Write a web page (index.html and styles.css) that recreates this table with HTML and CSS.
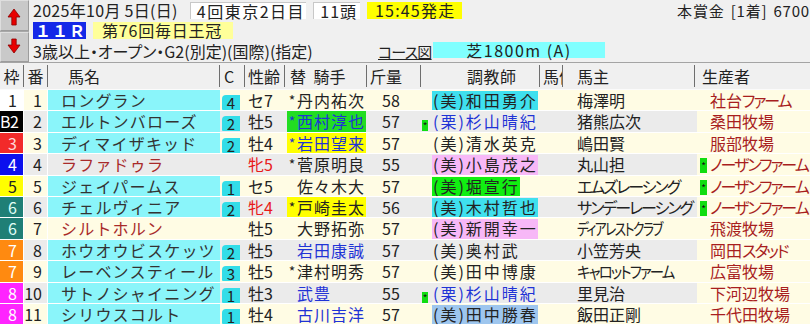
FILE: index.html
```html
<!DOCTYPE html>
<html lang="ja">
<head>
<meta charset="utf-8">
<title>出馬表</title>
<link rel="stylesheet" href="styles.css">
</head>
<body>
<div class="top">
  <div class="nav">
    <div class="navbtn up">
      <svg width="14" height="18" viewBox="0 0 14 18"><path d="M7 1 L13 9 L9.2 9 L9.2 17 L4.8 17 L4.8 9 L1 9 Z" fill="#e80000" stroke="#8a0000" stroke-width="0.8"/></svg>
    </div>
    <div class="navbtn down">
      <svg width="14" height="16" viewBox="0 0 14 16"><path d="M7 15 L13 7 L9.2 7 L9.2 1 L4.8 1 L4.8 7 L1 7 Z" fill="#e80000" stroke="#8a0000" stroke-width="0.8"/></svg>
    </div>
  </div>
  <div class="info">
    <div class="line l1">
      <span class="date">2025年10月 5日(日)</span>
      <span class="box kai">4回東京2日目</span>
      <span class="box tou">11頭</span>
      <span class="box time">15:45発走</span>
      <span class="prize">本賞金 [1着] 6700</span>
    </div>
    <div class="line l2">
      <span class="race-no">１１Ｒ</span>
      <span class="race-name">第76回毎日王冠</span>
    </div>
    <div class="line l3">
      <span class="cond">3歳以上・オープン・G2(別定)(国際)(指定)</span>
      <span class="course-link">コース図</span>
      <span class="course">芝1800m (A)</span>
    </div>
  </div>
</div>

<div class="thead">
  <div class="th c-waku">枠</div>
  <div class="th c-ban">番</div>
  <div class="th c-name">馬名</div>
  <div class="th c-c">C</div>
  <div class="th c-sa">性齢</div>
  <div class="th c-jk">替 騎手</div>
  <div class="th c-wt">斤量</div>
  <div class="th c-tr">調教師</div>
  <div class="th c-hw">馬体重</div>
  <div class="th c-ow">馬主</div>
  <div class="th c-br">生産者</div>
</div>

<div class="tbody">
  <div class="row odd">
    <div class="waku w1">1</div><div class="ban">1</div>
    <div class="name">ロングラン</div>
    <div class="c"><span class="cbox">4</span></div>
    <div class="sa">セ7</div>
    <div class="jockey"><span class="jk"><span class="ast">*</span><span class="jname">丹内祐次</span></span></div>
    <div class="wt">58</div>
    <div class="mark"></div>
    <div class="trainer"><span class="tb cyan">(美)和田勇介</span></div>
    <div class="hw"></div>
    <div class="owner">梅澤明</div>
    <div class="bmark"></div>
    <div class="breeder">社台<span class="k">ファーム</span></div>
  </div>

  <div class="row even">
    <div class="waku w2">B2</div><div class="ban">2</div>
    <div class="name">エルトンバローズ</div>
    <div class="c"><span class="cbox">2</span></div>
    <div class="sa">牡5</div>
    <div class="jockey"><span class="jk green blue"><span class="ast">*</span><span class="jname">西村淳也</span></span></div>
    <div class="wt">57</div>
    <div class="mark"><span class="mk">*</span></div>
    <div class="trainer"><span class="tb blue">(栗)杉山晴紀</span></div>
    <div class="hw"></div>
    <div class="owner">猪熊広次</div>
    <div class="bmark"></div>
    <div class="breeder">桑田牧場</div>
  </div>

  <div class="row odd">
    <div class="waku w3">3</div><div class="ban">3</div>
    <div class="name">ディマイザキッド</div>
    <div class="c"><span class="cbox">2</span></div>
    <div class="sa">牡4</div>
    <div class="jockey"><span class="jk yellow blue"><span class="ast">*</span><span class="jname">岩田望来</span></span></div>
    <div class="wt">57</div>
    <div class="mark"></div>
    <div class="trainer"><span class="tb">(美)清水英克</span></div>
    <div class="hw"></div>
    <div class="owner">嶋田賢</div>
    <div class="bmark"></div>
    <div class="breeder">服部牧場</div>
  </div>

  <div class="row even">
    <div class="waku w4">4</div><div class="ban">4</div>
    <div class="name plain">ラファドゥラ</div>
    <div class="c"></div>
    <div class="sa red">牝5</div>
    <div class="jockey"><span class="jk"><span class="ast">*</span><span class="jname">菅原明良</span></span></div>
    <div class="wt">55</div>
    <div class="mark"></div>
    <div class="trainer"><span class="tb pink">(美)小島茂之</span></div>
    <div class="hw"></div>
    <div class="owner">丸山担</div>
    <div class="bmark"><span class="bmk">*</span></div>
    <div class="breeder"><span class="k">ノーザンファーム</span></div>
  </div>

  <div class="row odd">
    <div class="waku w5">5</div><div class="ban">5</div>
    <div class="name">ジェイパームス</div>
    <div class="c"><span class="cbox">1</span></div>
    <div class="sa">セ5</div>
    <div class="jockey"><span class="jk"><span class="ast"></span><span class="jname">佐々木大</span></span></div>
    <div class="wt">57</div>
    <div class="mark"></div>
    <div class="trainer"><span class="tb green">(美)堀宣行</span></div>
    <div class="hw"></div>
    <div class="owner"><span class="k">エムズレーシング</span></div>
    <div class="bmark"><span class="bmk">*</span></div>
    <div class="breeder"><span class="k">ノーザンファーム</span></div>
  </div>

  <div class="row even">
    <div class="waku w6">6</div><div class="ban">6</div>
    <div class="name">チェルヴィニア</div>
    <div class="c"><span class="cbox">2</span></div>
    <div class="sa red">牝4</div>
    <div class="jockey"><span class="jk yellow"><span class="ast">*</span><span class="jname">戸崎圭太</span></span></div>
    <div class="wt">56</div>
    <div class="mark"></div>
    <div class="trainer"><span class="tb cyan">(美)木村哲也</span></div>
    <div class="hw"></div>
    <div class="owner"><span class="k">サンデーレーシング</span></div>
    <div class="bmark"><span class="bmk">*</span></div>
    <div class="breeder"><span class="k">ノーザンファーム</span></div>
  </div>

  <div class="row odd">
    <div class="waku w6">6</div><div class="ban">7</div>
    <div class="name plain">シルトホルン</div>
    <div class="c"></div>
    <div class="sa">牡5</div>
    <div class="jockey"><span class="jk"><span class="ast"></span><span class="jname">大野拓弥</span></span></div>
    <div class="wt">57</div>
    <div class="mark"></div>
    <div class="trainer"><span class="tb pink">(美)新開幸一</span></div>
    <div class="hw"></div>
    <div class="owner"><span class="k narrow">ディアレストクラブ</span></div>
    <div class="bmark"></div>
    <div class="breeder">飛渡牧場</div>
  </div>

  <div class="row even">
    <div class="waku w7">7</div><div class="ban">8</div>
    <div class="name">ホウオウビスケッツ</div>
    <div class="c"><span class="cbox">2</span></div>
    <div class="sa">牡5</div>
    <div class="jockey"><span class="jk blue"><span class="ast"></span><span class="jname">岩田康誠</span></span></div>
    <div class="wt">57</div>
    <div class="mark"></div>
    <div class="trainer"><span class="tb">(美)奥村武</span></div>
    <div class="hw"></div>
    <div class="owner">小笠芳央</div>
    <div class="bmark"></div>
    <div class="breeder">岡田<span class="k">スタッド</span></div>
  </div>

  <div class="row odd">
    <div class="waku w7">7</div><div class="ban">9</div>
    <div class="name">レーベンスティール</div>
    <div class="c"><span class="cbox">3</span></div>
    <div class="sa">牡5</div>
    <div class="jockey"><span class="jk"><span class="ast">*</span><span class="jname">津村明秀</span></span></div>
    <div class="wt">57</div>
    <div class="mark"></div>
    <div class="trainer"><span class="tb">(美)田中博康</span></div>
    <div class="hw"></div>
    <div class="owner"><span class="k narrow2">キャロットファーム</span></div>
    <div class="bmark"></div>
    <div class="breeder">広富牧場</div>
  </div>

  <div class="row even">
    <div class="waku w8">8</div><div class="ban">10</div>
    <div class="name">サトノシャイニング</div>
    <div class="c"><span class="cbox">1</span></div>
    <div class="sa">牡3</div>
    <div class="jockey"><span class="jk blue"><span class="ast"></span><span class="jname">武豊</span></span></div>
    <div class="wt">55</div>
    <div class="mark"><span class="mk">*</span></div>
    <div class="trainer"><span class="tb blue">(栗)杉山晴紀</span></div>
    <div class="hw"></div>
    <div class="owner">里見治</div>
    <div class="bmark"></div>
    <div class="breeder">下河辺牧場</div>
  </div>

  <div class="row odd">
    <div class="waku w8">8</div><div class="ban">11</div>
    <div class="name">シリウスコルト</div>
    <div class="c"><span class="cbox">1</span></div>
    <div class="sa">牡4</div>
    <div class="jockey"><span class="jk blue"><span class="ast"></span><span class="jname">古川吉洋</span></span></div>
    <div class="wt">57</div>
    <div class="mark"></div>
    <div class="trainer"><span class="tb lblue">(美)田中勝春</span></div>
    <div class="hw"></div>
    <div class="owner">飯田正剛</div>
    <div class="bmark"></div>
    <div class="breeder">千代田牧場</div>
  </div>
</div>
</body>
</html>
```

FILE: styles.css
```css
* { box-sizing: border-box; }

html, body {
  margin: 0;
  padding: 0;
}

body {
  width: 810px;
  height: 327px;
  overflow: hidden;
  background: #fbfbfb;
  font-family: "Noto Sans CJK JP", "Noto Sans", sans-serif;
  font-size: 16px;
  color: #222;
}

/* ---------- top info area ---------- */
.top {
  display: flex;
  height: 62px;
  background: #f0f0f0;
}

.nav {
  width: 29px;
  display: flex;
  flex-direction: column;
  gap: 1px;
  background: #a8a8a8;
}

.navbtn {
  flex: 1;
  background: #c9c9c9;
  border: 1px solid;
  border-color: #dedede #9c9c9c #9c9c9c #dedede;
  display: flex;
  align-items: center;
  justify-content: center;
}

.navbtn.up svg { margin-top: 4px; margin-left: -2px; }
.navbtn.down svg { margin-top: -2px; margin-left: -2px; }

.info {
  flex: 1;
  padding: 1px 0 0 4px;
  display: flex;
  flex-direction: column;
  white-space: nowrap;
  overflow: hidden;
}

.line {
  display: flex;
  align-items: center;
}

.l1 { height: 19px; }
.l2 { height: 20px; }
.l3 { height: 21px; }

.date {
  width: 162px;
  line-height: 17px;
  letter-spacing: 0.3px;
}

.box {
  height: 17px;
  line-height: 17px;
}

.kai {
  width: 120px;
  background: #fff;
  border-left: 1px solid #c8c8c8;
  border-top: 1px solid #c8c8c8;
  padding-left: 6px;
  letter-spacing: 1.5px;
}

.tou {
  width: 48px;
  margin-left: 7px;
  background: #fff;
  border-left: 1px solid #c8c8c8;
  border-top: 1px solid #c8c8c8;
  padding-left: 6px;
  letter-spacing: 1px;
}

.time {
  width: 98px;
  margin-left: 7px;
  background: #ffff00;
  padding-left: 8px;
  letter-spacing: 1.2px;
}

.prize {
  margin-left: 215px;
  font-size: 15px;
  line-height: 17px;
  letter-spacing: 0.8px;
  word-spacing: 2px;
}

.race-no {
  width: 53px;
  height: 17px;
  line-height: 17px;
  margin-top: 1px;
  background: #1428e8;
  color: #fff;
  font-weight: bold;
  letter-spacing: 1px;
  padding-left: 2px;
}

.race-name {
  width: 140px;
  height: 17px;
  line-height: 17px;
  margin-top: 1px;
  margin-left: 7px;
  background: #ffff99;
  padding-left: 9px;
  letter-spacing: 0.8px;
}

.cond {
  width: 345px;
  font-feature-settings: "palt";
  line-height: 17px;
  margin-top: 1px;
}

.course-link {
  width: 55px;
  font-size: 15px;
  line-height: 17px;
  text-decoration: underline;
  font-feature-settings: "palt";
  letter-spacing: -0.8px;
  margin-top: 2px;
}

.course {
  width: 172px;
  height: 16px;
  line-height: 16px;
  margin-top: -2px;
  background: #80ffff;
  text-align: center;
  letter-spacing: 1.5px;
}

/* ---------- table header ---------- */
.thead {
  display: grid;
  grid-template-columns: 24px 24px 172px 25px 40px 82px 54px 119px 23px 132px 1fr;
  height: 27px;
  align-items: center;
  background: #f0f0f0;
  border-top: 1px solid #a4a4a4;
  white-space: nowrap;
}

.th {
  height: 22px;
  line-height: 22px;
  border-right: 1px solid #6e6e6e;
  overflow: hidden;
}

.th:last-child { border-right: none; }

.c-waku, .c-ban { text-align: center; }
.c-name { padding-left: 20px; }
.c-c { padding-left: 4px; }
.c-sa { padding-left: 3px; }
.c-jk { padding-left: 5px; word-spacing: 4px; }
.c-wt { padding-left: 3px; }
.c-tr { padding-left: 46px; letter-spacing: 0.5px; }
.c-hw { padding-left: 3px; }
.c-ow { padding-left: 14px; }
.c-br { padding-left: 7px; }

/* ---------- table body ---------- */
.tbody {
  background: #fff;
  padding-bottom: 3px;
}

.row {
  display: grid;
  grid-template-columns: 24px 24px 172px 25px 40px 82px 54px 11px 108px 23px 134px 12px 1fr;
  height: 20.4px;
  margin-top: 1px;
  line-height: 20.4px;
  white-space: nowrap;
}

.row.odd { background: #fffce4; }
.row.even { background: #ebebeb; }

.waku {
  text-align: right;
  padding-right: 6px;
  border-right: 1px solid #fff;
}

.w1 { background: #fff; color: #222; }
.w2 { background: #000; color: #fff; letter-spacing: -0.5px; padding-right: 8px; }
.w3 { background: #f22a2a; color: #ffd8d8; }
.w4 { background: #0c10ee; color: #fff; }
.w5 { background: #ffff00; color: #222; }
.w6 { background: #1f7f76; color: #e0fff8; }
.w7 { background: #ff8a10; color: #fff; }
.w8 { background: #ff24ff; color: #fff; }

.ban {
  text-align: right;
  padding-right: 5px;
  border-right: 1px solid #fff;
}

.name {
  background: #8af5fa;
  padding-left: 13px;
  letter-spacing: 1.2px;
  color: #333;
  overflow: visible;
}

.name.plain {
  background: transparent;
  color: #a82a2a;
}

.c {
  padding: 5px 0 0 2px;
}

.cbox {
  display: block;
  width: 18px;
  height: 15px;
  line-height: 15px;
  background: #33dde8;
  border-radius: 4px 0 0 1px;
  text-align: center;
  font-size: 15px;
}

.sa { padding-left: 3px; }
.red { color: #e81a1a; }

.jockey { padding-left: 2px; }

.jk {
  display: inline-block;
  height: 20.4px;
  padding-right: 1px;
}

.jk.green { background: #22dd22; }
.jk.yellow { background: #ffff00; }
.blue { color: #1f33d6; }

.ast {
  display: inline-block;
  width: 10px;
  text-align: center;
  font-size: 14px;
  vertical-align: top;
}

.jname { letter-spacing: 1px; }

.wt { padding-left: 15px; }

.mk {
  display: block;
  width: 6px;
  height: 11px;
  margin: 9px 0 0 1px;
  background: #11dd11;
  color: #111;
  font-size: 10px;
  line-height: 12px;
  text-align: center;
}

.trainer { overflow: visible; }

.tb {
  display: inline-block;
  height: 19.4px;
  line-height: 19.4px;
  padding-left: 1px;
  letter-spacing: 2px;
}

.tb.cyan { background: #3fe0ee; }
.tb.pink { background: #f7b8f7; }
.tb.green { background: #11ee11; }
.tb.lblue { background: #9ec6ee; }

.owner {
  padding-left: 14px;
  font-feature-settings: "palt";
  overflow: visible;
  position: relative;
  z-index: 1;
}

.k { letter-spacing: -2px; }

.narrow {
  display: inline-block;
  transform: scaleX(0.8);
  transform-origin: left center;
}

.narrow2 {
  display: inline-block;
  transform: scaleX(0.9);
  transform-origin: left center;
}

.bmark, .breeder { background: #fffce4; }

.bmk {
  display: block;
  width: 7px;
  height: 15px;
  margin: 4px 0 0 3px;
  background: #11dd11;
  color: #111;
  font-size: 10px;
  line-height: 15px;
  text-align: center;
  position: relative;
  z-index: 2;
}

.breeder {
  padding-left: 1px;
  color: #a81e1e;
  font-feature-settings: "palt";
}
```
